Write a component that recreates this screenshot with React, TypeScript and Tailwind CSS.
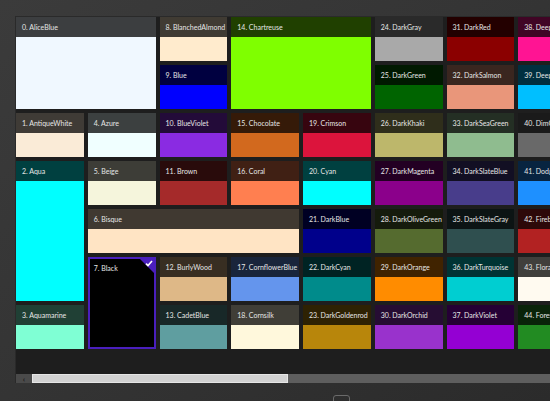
import React from "react";

type Item = { n: string; c: string; col: number; row: number; cs?: number; rs?: number };

const items: Item[] = [
  { n: "AliceBlue", c: "#F0F8FF", col: 1, row: 1, cs: 2, rs: 2 },
  { n: "AntiqueWhite", c: "#FAEBD7", col: 1, row: 3 },
  { n: "Aqua", c: "#00FFFF", col: 1, row: 4, rs: 3 },
  { n: "Aquamarine", c: "#7FFFD4", col: 1, row: 7 },
  { n: "Azure", c: "#F0FFFF", col: 2, row: 3 },
  { n: "Beige", c: "#F5F5DC", col: 2, row: 4 },
  { n: "Bisque", c: "#FFE4C4", col: 2, row: 5, cs: 3 },
  { n: "Black", c: "#000000", col: 2, row: 6, rs: 2 },
  { n: "BlanchedAlmond", c: "#FFEBCD", col: 3, row: 1 },
  { n: "Blue", c: "#0000FF", col: 3, row: 2 },
  { n: "BlueViolet", c: "#8A2BE2", col: 3, row: 3 },
  { n: "Brown", c: "#A52A2A", col: 3, row: 4 },
  { n: "BurlyWood", c: "#DEB887", col: 3, row: 6 },
  { n: "CadetBlue", c: "#5F9EA0", col: 3, row: 7 },
  { n: "Chartreuse", c: "#7FFF00", col: 4, row: 1, cs: 2, rs: 2 },
  { n: "Chocolate", c: "#D2691E", col: 4, row: 3 },
  { n: "Coral", c: "#FF7F50", col: 4, row: 4 },
  { n: "CornflowerBlue", c: "#6495ED", col: 4, row: 6 },
  { n: "Cornsilk", c: "#FFF8DC", col: 4, row: 7 },
  { n: "Crimson", c: "#DC143C", col: 5, row: 3 },
  { n: "Cyan", c: "#00FFFF", col: 5, row: 4 },
  { n: "DarkBlue", c: "#00008B", col: 5, row: 5 },
  { n: "DarkCyan", c: "#008B8B", col: 5, row: 6 },
  { n: "DarkGoldenrod", c: "#B8860B", col: 5, row: 7 },
  { n: "DarkGray", c: "#A9A9A9", col: 6, row: 1 },
  { n: "DarkGreen", c: "#006400", col: 6, row: 2 },
  { n: "DarkKhaki", c: "#BDB76B", col: 6, row: 3 },
  { n: "DarkMagenta", c: "#8B008B", col: 6, row: 4 },
  { n: "DarkOliveGreen", c: "#556B2F", col: 6, row: 5 },
  { n: "DarkOrange", c: "#FF8C00", col: 6, row: 6 },
  { n: "DarkOrchid", c: "#9932CC", col: 6, row: 7 },
  { n: "DarkRed", c: "#8B0000", col: 7, row: 1 },
  { n: "DarkSalmon", c: "#E9967A", col: 7, row: 2 },
  { n: "DarkSeaGreen", c: "#8FBC8F", col: 7, row: 3 },
  { n: "DarkSlateBlue", c: "#483D8B", col: 7, row: 4 },
  { n: "DarkSlateGray", c: "#2F4F4F", col: 7, row: 5 },
  { n: "DarkTurquoise", c: "#00CED1", col: 7, row: 6 },
  { n: "DarkViolet", c: "#9400D3", col: 7, row: 7 },
  { n: "DeepPink", c: "#FF1493", col: 8, row: 1 },
  { n: "DeepSkyBlue", c: "#00BFFF", col: 8, row: 2 },
  { n: "DimGray", c: "#696969", col: 8, row: 3 },
  { n: "DodgerBlue", c: "#1E90FF", col: 8, row: 4 },
  { n: "Firebrick", c: "#B22222", col: 8, row: 5 },
  { n: "FloralWhite", c: "#FFFAF0", col: 8, row: 6 },
  { n: "ForestGreen", c: "#228B22", col: 8, row: 7 },
];

function dim(hex: string, f = 0.25) {
  const v = parseInt(hex.slice(1), 16);
  const r = Math.round(((v >> 16) & 255) * f);
  const g = Math.round(((v >> 8) & 255) * f);
  const b = Math.round((v & 255) * f);
  return `rgb(${r},${g},${b})`;
}

function Tile({ it, i }: { it: Item; i: number }) {
  const selected = it.n === "Black";
  const place: React.CSSProperties = {
    gridColumn: `${it.col} / span ${it.cs ?? 1}`,
    gridRow: `${it.row} / span ${it.rs ?? 1}`,
  };
  if (selected) {
    return (
      <div style={place} className="relative flex flex-col bg-black border-2 border-[#4a1fbd]">
        <div className="h-[18px] flex items-center pl-[4px] text-[7px] text-[#e6e6e6] whitespace-nowrap">
          {i}. {it.n}
        </div>
        <div className="absolute top-0 right-0 w-0 h-0 border-t-[14px] border-l-[14px] border-t-[#4a1fbd] border-l-transparent" />
        <svg className="absolute top-[1px] right-[1px]" width="8" height="7" viewBox="0 0 8 7">
          <path d="M1 3.6 L3 5.6 L7 1" fill="none" stroke="#ffffff" strokeWidth="1.6" />
        </svg>
      </div>
    );
  }
  return (
    <div style={place} className="flex flex-col">
      <div
        style={{ backgroundColor: dim(it.c) }}
        className="h-[20px] shrink-0 flex items-center pl-[6px] text-[7px] text-[#e6e6e6] whitespace-nowrap overflow-hidden"
      >
        {i}. {it.n}
      </div>
      <div style={{ backgroundColor: it.c }} className="flex-1" />
    </div>
  );
}

export default function App() {
  return (
    <div
      className="w-[550px] h-[401px] overflow-hidden bg-gradient-to-br from-[#3b3b3b] via-[#343434] to-[#2b2b2b] pt-[16px] pl-[15px]"
      style={{ fontFamily: 'Lato, "Open Sans", sans-serif' }}
    >
      <div className="w-[535px] h-[367px] bg-[#1e1e1e] flex flex-col border-t border-l border-[#2a2a2a]">
        <div className="flex-1 overflow-hidden">
          <div className="grid w-max grid-cols-[repeat(8,67.75px)] grid-rows-[repeat(7,44px)] gap-[4px]">
            {items.map((it, i) => (
              <Tile key={it.n} it={it} i={i} />
            ))}
          </div>
        </div>
        <div className="h-[9px] flex shrink-0">
          <div className="w-[16px] bg-[#4a4a4a] flex items-center justify-center text-[#1a1a1a] text-[8px] leading-none font-bold">
            ‹
          </div>
          <div className="w-[256px] bg-[#d2d2d2] border border-[#e6e6e6]" />
          <div className="flex-1 bg-[#5e5e5e]" />
        </div>
      </div>
      <div className="ml-[318px] mt-[12px] w-[17px] h-[10px] rounded-[3px] border border-[#6a6a6a]" />
    </div>
  );
}
